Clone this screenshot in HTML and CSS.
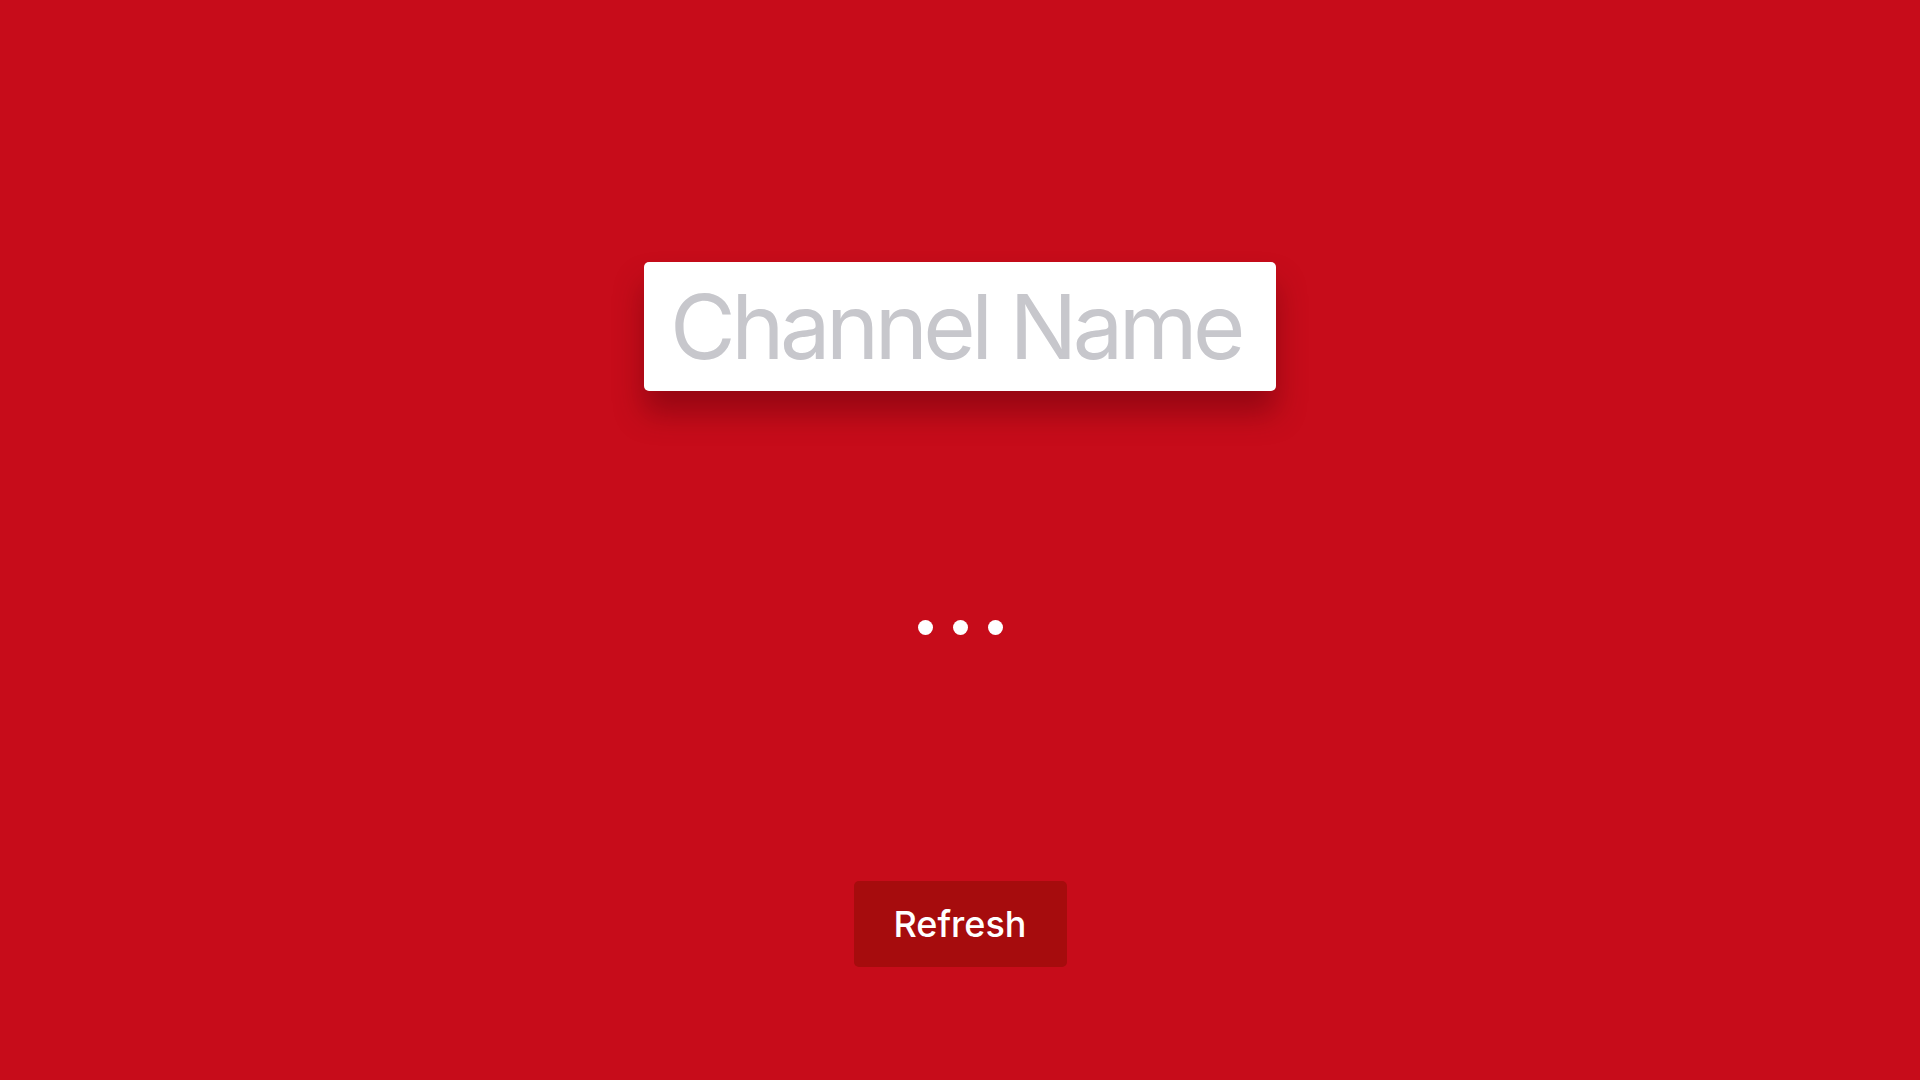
FILE: index.html
```html
<!DOCTYPE html>
<html>
<head>
<meta charset="utf-8">
<link rel="stylesheet" href="styles.css">
</head>
<body>
<main class="screen">
  <div class="field">
    <input class="field-input" type="text" placeholder="Channel Name">
  </div>
  <div class="loader">
    <span class="dot"></span>
    <span class="dot"></span>
    <span class="dot"></span>
  </div>
  <button class="refresh">Refresh</button>
</main>
</body>
</html>
```
FILE: styles.css
```css
html, body {
  margin: 0;
  padding: 0;
  width: 1920px;
  height: 1080px;
  overflow: hidden;
  background: #c70c1a;
}
.screen {
  display: flex;
  flex-direction: column;
  align-items: center;
  height: 1080px;
  font-family: Inter, "Noto Sans", sans-serif;
}
.field {
  margin-top: 262px;
  width: 632px;
  height: 129px;
  background: #fff;
  border-radius: 5px;
  box-shadow: 0 22px 30px rgba(90, 0, 10, 0.45);
  display: flex;
  align-items: center;
  box-sizing: border-box;
}
.field-input {
  border: 0;
  outline: none;
  background: transparent;
  width: 100%;
  padding: 0 0 0 26px;
  margin: 0;
  font-family: Inter, "Noto Sans", sans-serif;
  font-size: 90px;
  letter-spacing: -4.5px;
  color: #333;
  height: 129px;
  box-sizing: border-box;
}
.field-input::placeholder {
  color: #c7c7cc;
  opacity: 1;
}
.loader {
  margin-top: 229px;
  display: flex;
  gap: 20px;
  height: 15px;
}
.dot {
  width: 15px;
  height: 15px;
  border-radius: 50%;
  background: #fff;
}
.refresh {
  margin-top: 246px;
  width: 213px;
  height: 86px;
  border: 0;
  border-radius: 5px;
  background: #a60c0d;
  color: #fff;
  font-family: Inter, "Noto Sans", sans-serif;
  font-size: 36px;
  font-weight: 500;
  padding: 0;
}
```
